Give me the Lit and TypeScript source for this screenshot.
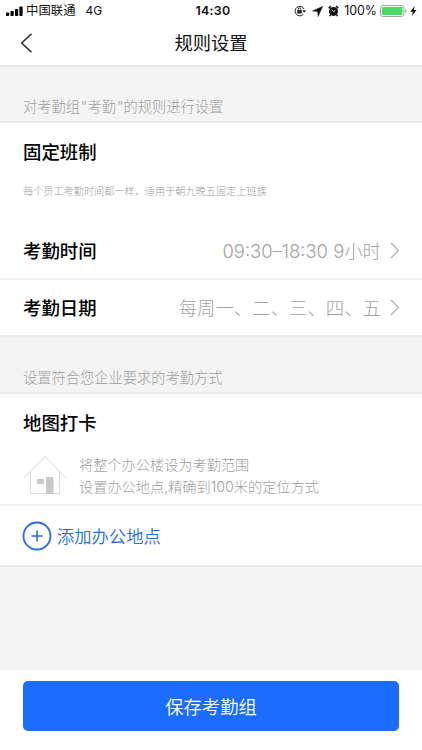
import { LitElement, html, css } from "lit";
import { customElement, property } from "lit/decorators.js";

@customElement("status-bar")
class StatusBar extends LitElement {
  static styles = css`
    :host {
      display: grid;
      grid-template-columns: 1fr auto 1fr;
      align-items: center;
      height: 22px;
      padding: 0 5px 0 6px;
      font-size: 12.4px;
      line-height: 22px;
      color: #111;
    }
    .left,
    .right {
      display: flex;
      align-items: center;
      white-space: nowrap;
    }
    .right {
      justify-content: flex-end;
    }
    .signal {
      margin-right: 3px;
    }
    .net {
      margin-left: 10px;
      font-size: 12px;
    }
    .time {
      font-weight: 600;
      font-size: 12.4px;
      letter-spacing: 0.3px;
      padding-left: 3px;
    }
    .lock {
      margin-right: 6px;
    }
    .arrow {
      margin-right: 5px;
    }
    .alarm {
      margin-right: 5px;
    }
    .battery {
      margin: 0 3px;
    }
    svg {
      display: block;
      flex: none;
    }
  `;
  render() {
    return html`
      <div class="left">
        <svg class="signal" width="17" height="10" viewBox="0 0 17 10">
          <rect x="0" y="6.5" width="3.2" height="3.5" rx=".8" />
          <rect x="4.5" y="5" width="3.2" height="5" rx=".8" />
          <rect x="9" y="3" width="3.2" height="7" rx=".8" />
          <rect x="13.4" y="0.5" width="3.2" height="9.5" rx=".8" />
        </svg>
        <span>中国联通</span><span class="net">4G</span>
      </div>
      <span class="time">14:30</span>
      <div class="right">
        <svg class="lock" width="12" height="12" viewBox="0 0 12 12" fill="none" stroke="#222">
          <path d="M9.300 9.300A4.700 4.700 0 1 1 10 4" />
          <path d="M8.400 5.300h3.600l-1.800 2.500z" fill="#222" stroke="none" />
          <rect x="3.200" y="5.200" width="4.600" height="3.300" fill="#222" stroke="none" />
          <path d="M4.200 5.400V4.200a1.300 1.300 0 0 1 2.600 0v1.200" stroke-width=".9" />
        </svg>
        <svg class="arrow" width="11" height="11" viewBox="0 0 11 11">
          <path d="M10.800.3.400 5l5.100.6.600 5z" fill="#111" stroke="#111" stroke-width=".4" />
        </svg>
        <svg class="alarm" width="11" height="12" viewBox="0 0 11 12">
          <circle cx="5.500" cy="6.400" r="4.500" fill="#111" />
          <path d="M.7 3.300 2.900 1.100M10.300 3.300 8.100 1.100M2.600 9.600 1.600 11.200M8.400 9.600l1 1.600" stroke="#111" stroke-width="1.500" />
          <path d="M3.600 4.800l2 1.800L7.300 5.400" fill="none" stroke="#fff" stroke-width=".8" />
        </svg>
        <span>100%</span>
        <svg class="battery" width="27" height="12" viewBox="0 0 27 12">
          <rect x=".5" y=".5" width="23.500" height="11" rx="2.500" fill="#fff" stroke="#a5a5a5" />
          <rect x="2" y="2" width="20.500" height="8" rx="1" fill="#4cd964" />
          <path d="M25.200 4v4q1.300-.6 1.300-2t-1.300-2z" fill="#999" />
        </svg>
        <svg width="7" height="10" viewBox="0 0 7 10">
          <path d="M4.600 0 .3 5.700h2.500L2 10l4.500-6H4z" fill="#111" />
        </svg>
      </div>
    `;
  }
}

@customElement("setting-row")
class SettingRow extends LitElement {
  @property() label = "";
  @property() value = "";
  static styles = css`
    :host {
      display: flex;
      align-items: center;
      box-sizing: border-box;
      height: 57px;
      padding: 0 22px 0 23px;
      border-bottom: 2px solid #efefef;
      white-space: nowrap;
    }
    .label {
      padding-bottom: 2px;
      font-size: 18.4px;
      font-weight: 500;
      color: #000;
    }
    .value {
      margin-left: auto;
      padding-bottom: 2px;
      font-size: 18.4px;
      font-weight: 300;
      color: #a3a3a3;
    }
    svg {
      margin-left: 9px;
      flex: none;
    }
  `;
  render() {
    return html`
      <span class="label">${this.label}</span>
      <span class="value">${this.value}</span>
      <svg width="10" height="17" viewBox="0 0 10 17">
        <path d="M1 1 8.500 8.500 1 16" fill="none" stroke="#b0b0b0" stroke-width="1.200" />
      </svg>
    `;
  }
}

@customElement("app-root")
class AppRoot extends LitElement {
  static styles = css`
    :host {
      display: flex;
      flex-direction: column;
      height: 750px;
      background: #f4f4f4;
      font-family: Inter, "Noto Sans CJK SC", sans-serif;
      overflow: hidden;
    }
    svg {
      display: block;
      flex: none;
    }
    status-bar,
    .nav,
    .card,
    .footer {
      background: #fff;
    }
    .nav {
      display: grid;
      grid-template-columns: 20px 1fr 20px;
      align-items: center;
      box-sizing: border-box;
      height: 45px;
      padding: 0 20px 1px;
      border-bottom: 2px solid #e8e8e8;
    }
    .title {
      text-align: center;
      font-size: 18.3px;
      line-height: 41px;
      color: #111;
    }
    .hint {
      box-sizing: border-box;
      padding: 0 23px;
      font-size: 14.25px;
      font-weight: 300;
      line-height: 20px;
      color: #a0a0a0;
      border-bottom: 2px solid #ececec;
    }
    .hint.first {
      height: 56px;
      padding-top: 30px;
    }
    .hint.second {
      height: 57px;
      padding-top: 31px;
    }
    .quote {
      padding: 0 0.85px;
    }
    .heading {
      padding: 0 23px;
      font-size: 18.4px;
      font-weight: 500;
      line-height: 58px;
      color: #000;
    }
    .heading.map {
      height: 57px;
    }
    .note {
      height: 42px;
      padding: 0 23px;
      font-size: 10.17px;
      font-weight: 300;
      line-height: 20px;
      color: #a0a0a0;
    }
    .place {
      display: flex;
      box-sizing: border-box;
      height: 55px;
      padding: 3px 23px 0;
      gap: 12px;
      border-bottom: 2px solid #efefef;
      font-size: 14.2px;
      font-weight: 300;
      line-height: 21.5px;
      color: #a0a0a0;
      white-space: nowrap;
    }
    .add {
      display: flex;
      align-items: center;
      box-sizing: border-box;
      height: 61px;
      padding: 1px 0 0 22px;
      gap: 5px;
      border-bottom: 2px solid #ececec;
      color: #286ddf;
      font-size: 17.3px;
      font-weight: 350;
    }
    .add-label {
      padding-bottom: 2px;
    }
    .footer {
      box-sizing: border-box;
      height: 80px;
      margin-top: auto;
      padding: 11px 23px 0;
    }
    .save {
      display: block;
      width: 100%;
      height: 50px;
      padding: 0;
      border: 0;
      border-radius: 5px;
      background: #1a6dff;
      color: #fff;
      font: inherit;
      font-size: 18.3px;
      font-weight: 350;
    }
  `;
  render() {
    return html`
      <status-bar></status-bar>
      <div class="nav">
        <svg width="13" height="20" viewBox="0 0 13 20">
          <path d="M11.500.7 1.700 10l9.800 9.300" fill="none" stroke="#222" stroke-width="1.400" />
        </svg>
        <span class="title">规则设置</span>
      </div>
      <div class="hint first">对考勤组<span class="quote">“</span>考勤<span class="quote">”</span>的规则进行设置</div>
      <div class="card">
        <div class="heading">固定班制</div>
        <div class="note">每个员工考勤时间都一样，适用于朝九晚五固定上班族</div>
        <setting-row label="考勤时间" value="09:30–18:30 9小时"></setting-row>
        <setting-row label="考勤日期" value="每周一、二、三、四、五"></setting-row>
      </div>
      <div class="hint second">设置符合您企业要求的考勤方式</div>
      <div class="card">
        <div class="heading map">地图打卡</div>
        <div class="place">
          <svg width="44" height="42" viewBox="0 0 44 42">
            <path d="M.5 24.500 22 2.500 43.500 24.500M7.500 18V39.500H36.500V18" fill="none" stroke="#dcdcdc" />
            <rect x="14" y="25" width="7" height="5" fill="#c9c9c9" />
            <rect x="23" y="23" width="7.500" height="17" fill="#c9c9c9" />
          </svg>
          <div>将整个办公楼设为考勤范围<br />设置办公地点,精确到100米的定位方式</div>
        </div>
        <div class="add">
          <svg width="30" height="30" viewBox="0 0 30 30" fill="none" stroke="#286ddf">
            <circle cx="15" cy="15" r="13.500" stroke-width="1.800" />
            <path d="M9.500 15h11M15 9.500v11" stroke-width="1.600" />
          </svg>
          <span class="add-label">添加办公地点</span>
        </div>
      </div>
      <div class="footer"><button class="save">保存考勤组</button></div>
    `;
  }
}
